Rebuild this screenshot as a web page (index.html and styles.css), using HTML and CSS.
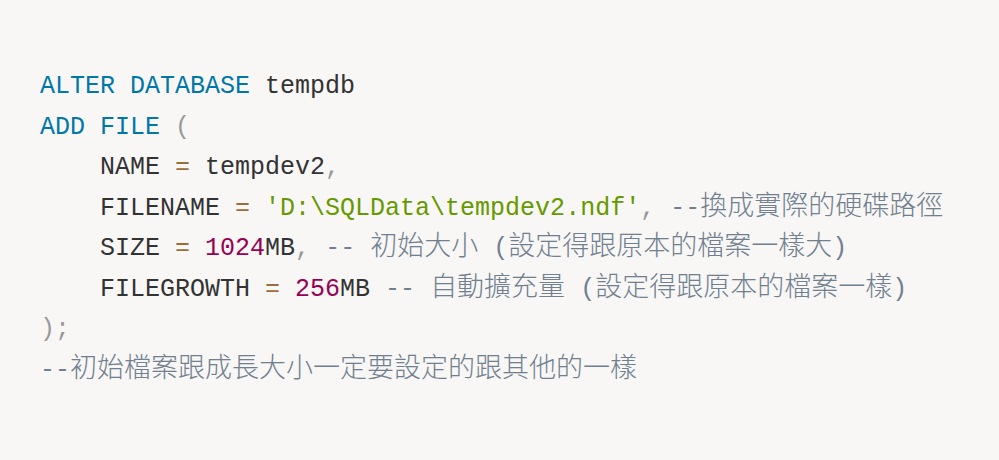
FILE: index.html
```html
<!DOCTYPE html>
<html lang="zh-Hant">
<head>
<meta charset="utf-8">
<title>SQL</title>
<link rel="stylesheet" href="styles.css">
</head>
<body>
<pre class="code"><code><span class="kw">ALTER</span> <span class="kw">DATABASE</span> tempdb
<span class="kw">ADD</span> <span class="kw">FILE</span> <span class="pu">(</span>
    NAME <span class="op">=</span> tempdev2<span class="pu">,</span>
    FILENAME <span class="op">=</span> <span class="str">'D:\SQLData\tempdev2.ndf'</span><span class="pu">,</span> <span class="cm">--<span class="cjk">換成實際的硬碟路徑</span></span>
    SIZE <span class="op">=</span> <span class="num">1024</span>MB<span class="pu">,</span> <span class="cm">-- <span class="cjk">初始大小</span> (<span class="cjk">設定得跟原本的檔案一樣大</span>)</span>
    FILEGROWTH <span class="op">=</span> <span class="num">256</span>MB <span class="cm">-- <span class="cjk">自動擴充量</span> (<span class="cjk">設定得跟原本的檔案一樣</span>)</span>
<span class="pu">);</span>
<span class="cm">--<span class="cjk">初始檔案跟成長大小一定要設定的跟其他的一樣</span></span></code></pre>
</body>
</html>
```

FILE: styles.css
```css
html, body {
  margin: 0;
  padding: 0;
  background: #f8f7f5;
}

.code {
  margin: 0;
  padding: 67px 40px 70px 40px;
  font-family: "Liberation Mono", "Noto Sans CJK TC", monospace;
  font-size: 25px;
  line-height: 40.5px;
  color: #333;
  background: #f8f7f5;
  white-space: pre;
}

.code code {
  font-family: inherit;
}

.kw { color: #0077aa; }
.op { color: #9a6e3a; }
.num { color: #990055; }
.str { color: #669900; }
.pu { color: #999999; }
.cm { color: #708090; }

.cjk {
  font-family: "Noto Sans CJK TC", sans-serif;
  font-size: 27px;
  line-height: 1;
  font-weight: 300;
}
```
